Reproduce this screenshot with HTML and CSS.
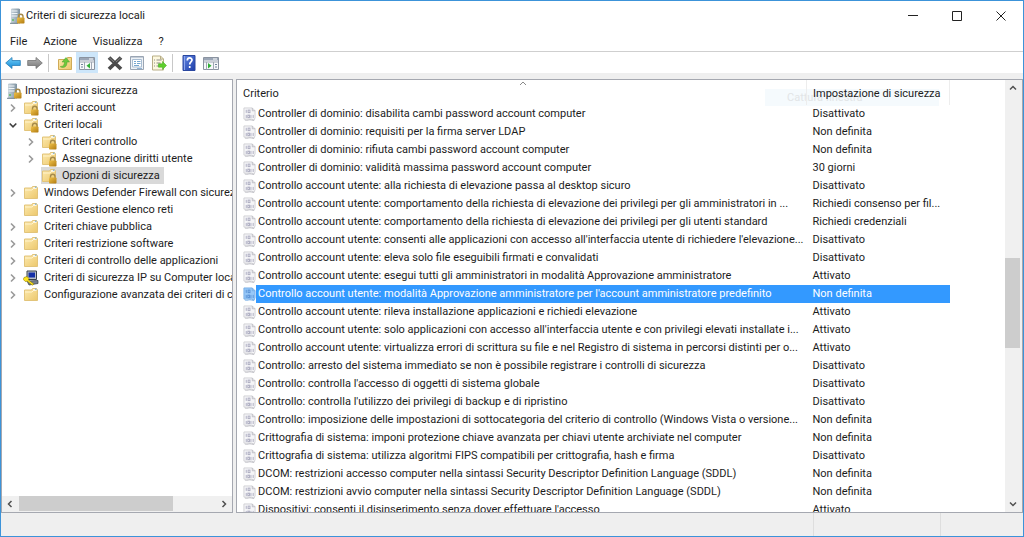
FILE: index.html
```
<!DOCTYPE html>
<html lang="it">
<head>
<meta charset="utf-8">
<title>Criteri di sicurezza locali</title>
<link rel="stylesheet" href="styles.css">
</head>
<body>
<svg class="sprite" aria-hidden="true">
  <defs>
    <linearGradient id="gold" x1="0" y1="0" x2="1" y2="1"><stop offset="0" stop-color="#fdeaae"/><stop offset="1" stop-color="#ecc76c"/></linearGradient>
    <linearGradient id="brass" x1="0" y1="0" x2="1" y2="1"><stop offset="0" stop-color="#f0c24a"/><stop offset="1" stop-color="#b07a10"/></linearGradient>
    <linearGradient id="steel" x1="0" y1="0" x2="1" y2="0"><stop offset="0" stop-color="#c6d2da"/><stop offset="1" stop-color="#7f93a1"/></linearGradient>
    <linearGradient id="sky" x1="0" y1="0" x2="0" y2="1"><stop offset="0" stop-color="#74d0fa"/><stop offset="1" stop-color="#1488d4"/></linearGradient>
    <linearGradient id="ash" x1="0" y1="0" x2="0" y2="1"><stop offset="0" stop-color="#b5b5b5"/><stop offset="1" stop-color="#777"/></linearGradient>
    <linearGradient id="royal" x1="0" y1="0" x2="1" y2="1"><stop offset="0" stop-color="#6488e4"/><stop offset="1" stop-color="#1c3ca8"/></linearGradient>
  </defs>
  <symbol id="lock" viewBox="0 0 16 16">
    <path d="M9.500 10V8.500a2 2 0 0 1 4.500 0V10" fill="none" stroke="#a58a4a" stroke-width="1.400"/>
    <rect x="8" y="9.500" width="7.500" height="6" rx=".8" fill="url(#brass)"/>
  </symbol>
  <symbol id="folder" viewBox="0 0 16 16">
    <path d="M1.500 13.500V3h7l1-1.500h4l1 1.500v10.500z" fill="url(#gold)" stroke="#e2c47a"/>
    <path d="M10 3h3.500" stroke="#fff" stroke-width="1.400"/><path d="M12 2.200h1.500" stroke="#5da4dc"/>
    <path d="M2 5h7l1-1" fill="none" stroke="#fff3cc"/>
  </symbol>
  <symbol id="folder-lock" viewBox="0 0 16 16"><use href="#folder"/><use href="#lock"/></symbol>
  <symbol id="server-lock" viewBox="0 0 16 16">
    <path d="M2 1l1-.6h6.500L11 1v14.500H2z" fill="url(#steel)"/>
    <path d="M2.500 3h6M2.500 5.500h6M2.500 8h6" stroke="#f1f6f9" stroke-width="1.100"/>
    <path d="M3 12h2" stroke="#5fbc5f" stroke-width="1.400"/><path d="M1 15.300h8" stroke="#71818c"/>
    <use href="#lock"/>
  </symbol>
  <symbol id="ipsec" viewBox="0 0 16 16">
    <path d="M4 1h9.500v8.500H4z" fill="#b9bfc6" stroke="#39424d"/><path d="M5.500 2.500h6.500v5H5.500z" fill="#1530a8"/>
    <path d="M4 11l11-.5v3L6 15z" fill="#77808c" stroke="#303944" stroke-width=".7"/>
    <path d="M1 7.500l3-1 2 2-.6 1.500 5.400 4-1.500 1.200-5-4-2 .3-2-2z" fill="#ffe51e" stroke="#8b7800" stroke-width=".6"/>
  </symbol>
  <symbol id="policy" viewBox="0 0 14 16">
    <path class="page" d="M1 1.500h9l3 3V12l-1 2.500-3-1H1z"/>
    <path class="fold" d="M10 1.500v3h3"/>
    <path class="digit" d="M3.500 3.500v3.300M3.500 9v3.300M8.500 9v3.300M11 9v3.300"/>
    <rect class="digit" x="5.500" y="3.800" width="2" height="2.700"/>
    <rect class="digit" x="5.200" y="9.200" width="1.800" height="2.700"/>
    <path class="fold" d="M2 14.500c3 1 5-1 7 0l3 .5"/>
  </symbol>
  <symbol id="right" viewBox="0 0 8 10"><path d="M2 1.500L5.500 5 2 8.500" fill="none" stroke="#9a9a9a" stroke-width="1.600"/></symbol>
  <symbol id="open" viewBox="0 0 8 10"><path d="M.7 3.500L4 6.800l3.300-3.300" fill="none" stroke="#404040" stroke-width="1.600"/></symbol>
</svg>

<div class="window">
  <header class="title-bar">
    <svg class="icon" viewBox="0 0 16 16"><use href="#server-lock"/></svg>
    <h1 class="title">Criteri di sicurezza locali</h1>
    <div class="controls">
      <button class="control" type="button" aria-label="Riduci a icona"><svg class="glyph" viewBox="0 0 12 12"><path d="M1 5.500h10"/></svg></button>
      <button class="control" type="button" aria-label="Ingrandisci"><svg class="glyph" viewBox="0 0 12 12"><path d="M1.500 1.500h9v9h-9z"/></svg></button>
      <button class="control" type="button" aria-label="Chiudi"><svg class="glyph" viewBox="0 0 12 12"><path d="M1.500 1.500l9 9M10.500 1.500l-9 9"/></svg></button>
    </div>
  </header>
  <nav class="menu-bar">
    <button class="menu" type="button">File</button>
    <button class="menu" type="button">Azione</button>
    <button class="menu" type="button">Visualizza</button>
    <button class="menu" type="button">?</button>
  </nav>
  <div class="toolbar">
    <button class="tool" type="button" aria-label="Indietro"><svg class="icon" viewBox="0 0 16 16"><path d="M.7 8L7 2.500v3h8.300v5H7v3z" fill="url(#sky)" stroke="#2a7fb8" stroke-width=".8"/></svg></button>
    <button class="tool" type="button" aria-label="Avanti"><svg class="icon" viewBox="0 0 16 16"><path d="M15.300 8L9 2.500v3H.7v5H9v3z" fill="url(#ash)" stroke="#737373" stroke-width=".8"/></svg></button>
    <span class="separator"></span>
    <button class="tool" type="button" aria-label="Livello superiore"><svg class="icon" viewBox="0 0 16 16"><path d="M1.500 14.500v-10h8l1-2h4v12z" fill="url(#gold)" stroke="#d0ab58"/><path d="M3.500 11.500c3 0 4-2 4-4.500H5l4-4.500L12.500 7H10c0 4-2 6.500-6.500 5z" fill="#6cc83c" stroke="#4a9e2a" stroke-width=".5"/></svg></button>
    <button class="tool active" type="button" aria-label="Mostra albero"><svg class="icon" viewBox="0 0 16 16"><path d="M.5 2.500h15v12H.5z" fill="#f7f8fa" stroke="#8a93a0"/><path d="M1 3h14v2.500H1z" fill="#9ba6b6"/><path d="M10 4h4" stroke="#fff"/><path d="M1 7h14M5.500 7v7.500M12.500 7v7.500" stroke="#a0a8b4"/><path d="M2 9.500h2M2 12h2" stroke="#71839a"/><path d="M11 8v5.500L7.500 10.800z" fill="#2fae35"/></svg></button>
    <span class="spacer"></span>
    <button class="tool" type="button" aria-label="Elimina"><svg class="icon" viewBox="0 0 16 16"><path d="M2 2.500l12 11.500M14 2.500L2 14" stroke="#4a4a4a" stroke-width="3.800"/><path d="M2 2.500l5 4.500M14 2.500L9 7" stroke="#828282"/></svg></button>
    <button class="tool" type="button" aria-label="Proprietà"><svg class="icon" viewBox="0 0 16 16"><path d="M1.500 1.500h13v13h-13z" fill="#eef2f6" stroke="#9aa5b3"/><path d="M3.500 4.500h9v7.500h-9z" fill="#fff" stroke="#a9bdd2"/><path d="M2 2.500h12" stroke="#c5ced9"/><path d="M5 6.500h2M8 6.500h3.500M5 8.500h2M8 8.500h3.500M5 10.500h5" stroke="#77a7cf"/><path d="M8 13.500h5" stroke="#8fb3d5"/></svg></button>
    <button class="tool" type="button" aria-label="Esporta elenco"><svg class="icon" viewBox="0 0 16 16"><path d="M1.500 1h8l3 3v11h-11z" fill="#fdf8df" stroke="#b8ae86"/><path d="M9.500 1v3h3" fill="none" stroke="#b8ae86"/><path d="M3 5h1M5.500 5h5M3 8h1M5.500 8h4M3 11h1M5.500 11h4" stroke="#8d8d88"/><path d="M7.500 8.800h4V6.500l4 4-4 4v-2.300h-4z" fill="#5fcf2d" stroke="#3fa51c" stroke-width=".5"/></svg></button>
    <span class="separator"></span>
    <button class="tool" type="button" aria-label="Guida"><svg class="icon" viewBox="0 0 16 16"><path d="M2 .5h12v15H2z" fill="url(#royal)" stroke="#2a479f"/><path d="M3.500 1v14" stroke="#8da6ec"/><path d="M6.300 5.500c0-3.500 5-3.200 4.700-.3-.2 1.800-2.300 1.800-2.300 4.300M8.700 11v2" fill="none" stroke="#fff" stroke-width="1.700"/></svg></button>
    <button class="tool" type="button" aria-label="Mostra riquadro azioni"><svg class="icon" viewBox="0 0 16 16"><path d="M.5 2.500h15v12H.5z" fill="#f7f8fa" stroke="#8a93a0"/><path d="M1 3h14v2.500H1z" fill="#9ba6b6"/><path d="M10 4h4" stroke="#fff"/><path d="M1 7h14M3.500 7v7.500M10.500 7v7.500" stroke="#a0a8b4"/><path d="M12 9.500h2M12 12h2" stroke="#71839a"/><path d="M5 8v5.500l3.500-2.700z" fill="#2fae35"/></svg></button>
  </div>

  <main class="panes">
    <section class="tree-pane">
      <ul class="tree">
        <li class="node root"><svg class="icon" viewBox="0 0 16 16"><use href="#server-lock"/></svg><span class="root-label">Impostazioni sicurezza</span></li>
        <li class="node"><svg class="arrow"><use href="#right"/></svg><svg class="icon"><use href="#folder-lock"/></svg><span class="label">Criteri account</span></li>
        <li class="node"><svg class="arrow"><use href="#open"/></svg><svg class="icon"><use href="#folder-lock"/></svg><span class="label">Criteri locali</span></li>
        <li class="node child"><svg class="arrow"><use href="#right"/></svg><svg class="icon"><use href="#folder-lock"/></svg><span class="label">Criteri controllo</span></li>
        <li class="node child"><svg class="arrow"><use href="#right"/></svg><svg class="icon"><use href="#folder-lock"/></svg><span class="label">Assegnazione diritti utente</span></li>
        <li class="node child"><span class="arrow"></span><span class="current"><svg class="icon"><use href="#folder-lock"/></svg><span class="label">Opzioni di sicurezza</span></span></li>
        <li class="node"><svg class="arrow"><use href="#right"/></svg><svg class="icon"><use href="#folder"/></svg><span class="label">Windows Defender Firewall con sicurezza avanzata</span></li>
        <li class="node"><span class="arrow"></span><svg class="icon"><use href="#folder"/></svg><span class="label">Criteri Gestione elenco reti</span></li>
        <li class="node"><svg class="arrow"><use href="#right"/></svg><svg class="icon"><use href="#folder"/></svg><span class="label">Criteri chiave pubblica</span></li>
        <li class="node"><svg class="arrow"><use href="#right"/></svg><svg class="icon"><use href="#folder"/></svg><span class="label">Criteri restrizione software</span></li>
        <li class="node"><svg class="arrow"><use href="#right"/></svg><svg class="icon"><use href="#folder"/></svg><span class="label">Criteri di controllo delle applicazioni</span></li>
        <li class="node"><svg class="arrow"><use href="#right"/></svg><svg class="icon"><use href="#ipsec"/></svg><span class="label">Criteri di sicurezza IP su Computer locale</span></li>
        <li class="node"><svg class="arrow"><use href="#right"/></svg><svg class="icon"><use href="#folder"/></svg><span class="label">Configurazione avanzata dei criteri di controllo</span></li>
      </ul>
      <div class="scroll-x">
        <button class="scroll-button" type="button" aria-label="Scorri a sinistra"><svg class="chevron" viewBox="0 0 8 8"><path d="M5.500 1L2.500 4l3 3"/></svg></button>
        <div class="track-x"><div class="thumb-x"></div></div>
        <button class="scroll-button" type="button" aria-label="Scorri a destra"><svg class="chevron" viewBox="0 0 8 8"><path d="M2.500 1l3 3-3 3"/></svg></button>
      </div>
    </section>

    <section class="list-pane">
      <div class="list">
        <svg class="sort" viewBox="0 0 8 5"><path d="M1 4l3-3 3 3"/></svg>
        <div class="ghost">Cattura finestra</div>
        <table class="policies">
          <colgroup><col class="col-name"><col class="col-value"></colgroup>
          <thead><tr><th>Criterio</th><th>Impostazione di sicurezza</th></tr></thead>
          <tbody>
            <tr><td><div class="item"><svg class="doc"><use href="#policy"/></svg><span class="name">Controller di dominio: disabilita cambi password account computer</span></div></td><td>Disattivato</td></tr>
            <tr><td><div class="item"><svg class="doc"><use href="#policy"/></svg><span class="name">Controller di dominio: requisiti per la firma server LDAP</span></div></td><td>Non definita</td></tr>
            <tr><td><div class="item"><svg class="doc"><use href="#policy"/></svg><span class="name">Controller di dominio: rifiuta cambi password account computer</span></div></td><td>Non definita</td></tr>
            <tr><td><div class="item"><svg class="doc"><use href="#policy"/></svg><span class="name">Controller di dominio: validità massima password account computer</span></div></td><td>30 giorni</td></tr>
            <tr><td><div class="item"><svg class="doc"><use href="#policy"/></svg><span class="name">Controllo account utente: alla richiesta di elevazione passa al desktop sicuro</span></div></td><td>Disattivato</td></tr>
            <tr><td><div class="item"><svg class="doc"><use href="#policy"/></svg><span class="name">Controllo account utente: comportamento della richiesta di elevazione dei privilegi per gli amministratori in ...</span></div></td><td>Richiedi consenso per fil...</td></tr>
            <tr><td><div class="item"><svg class="doc"><use href="#policy"/></svg><span class="name">Controllo account utente: comportamento della richiesta di elevazione dei privilegi per gli utenti standard</span></div></td><td>Richiedi credenziali</td></tr>
            <tr><td><div class="item"><svg class="doc"><use href="#policy"/></svg><span class="name">Controllo account utente: consenti alle applicazioni con accesso all'interfaccia utente di richiedere l'elevazione...</span></div></td><td>Disattivato</td></tr>
            <tr><td><div class="item"><svg class="doc"><use href="#policy"/></svg><span class="name">Controllo account utente: eleva solo file eseguibili firmati e convalidati</span></div></td><td>Disattivato</td></tr>
            <tr><td><div class="item"><svg class="doc"><use href="#policy"/></svg><span class="name">Controllo account utente: esegui tutti gli amministratori in modalità Approvazione amministratore</span></div></td><td>Attivato</td></tr>
            <tr class="selected"><td><div class="item"><svg class="doc"><use href="#policy"/></svg><span class="name">Controllo account utente: modalità Approvazione amministratore per l'account amministratore predefinito</span></div></td><td>Non definita</td></tr>
            <tr><td><div class="item"><svg class="doc"><use href="#policy"/></svg><span class="name">Controllo account utente: rileva installazione applicazioni e richiedi elevazione</span></div></td><td>Attivato</td></tr>
            <tr><td><div class="item"><svg class="doc"><use href="#policy"/></svg><span class="name">Controllo account utente: solo applicazioni con accesso all'interfaccia utente e con privilegi elevati installate i...</span></div></td><td>Attivato</td></tr>
            <tr><td><div class="item"><svg class="doc"><use href="#policy"/></svg><span class="name">Controllo account utente: virtualizza errori di scrittura su file e nel Registro di sistema in percorsi distinti per o...</span></div></td><td>Attivato</td></tr>
            <tr><td><div class="item"><svg class="doc"><use href="#policy"/></svg><span class="name">Controllo: arresto del sistema immediato se non è possibile registrare i controlli di sicurezza</span></div></td><td>Disattivato</td></tr>
            <tr><td><div class="item"><svg class="doc"><use href="#policy"/></svg><span class="name">Controllo: controlla l'accesso di oggetti di sistema globale</span></div></td><td>Disattivato</td></tr>
            <tr><td><div class="item"><svg class="doc"><use href="#policy"/></svg><span class="name">Controllo: controlla l'utilizzo dei privilegi di backup e di ripristino</span></div></td><td>Disattivato</td></tr>
            <tr><td><div class="item"><svg class="doc"><use href="#policy"/></svg><span class="name">Controllo: imposizione delle impostazioni di sottocategoria del criterio di controllo (Windows Vista o versione...</span></div></td><td>Non definita</td></tr>
            <tr><td><div class="item"><svg class="doc"><use href="#policy"/></svg><span class="name">Crittografia di sistema: imponi protezione chiave avanzata per chiavi utente archiviate nel computer</span></div></td><td>Non definita</td></tr>
            <tr><td><div class="item"><svg class="doc"><use href="#policy"/></svg><span class="name">Crittografia di sistema: utilizza algoritmi FIPS compatibili per crittografia, hash e firma</span></div></td><td>Disattivato</td></tr>
            <tr><td><div class="item"><svg class="doc"><use href="#policy"/></svg><span class="name">DCOM: restrizioni accesso computer nella sintassi Security Descriptor Definition Language (SDDL)</span></div></td><td>Non definita</td></tr>
            <tr><td><div class="item"><svg class="doc"><use href="#policy"/></svg><span class="name">DCOM: restrizioni avvio computer nella sintassi Security Descriptor Definition Language (SDDL)</span></div></td><td>Non definita</td></tr>
            <tr><td><div class="item"><svg class="doc"><use href="#policy"/></svg><span class="name">Dispositivi: consenti il disinserimento senza dover effettuare l'accesso</span></div></td><td>Attivato</td></tr>
          </tbody>
        </table>
      </div>
      <div class="scroll-y">
        <button class="scroll-button" type="button" aria-label="Scorri in alto"><svg class="chevron" viewBox="0 0 8 8"><path d="M1 5.500l3-3 3 3"/></svg></button>
        <div class="track-y"><div class="before-y"></div><div class="thumb-y"></div><div class="after-y"></div></div>
        <button class="scroll-button" type="button" aria-label="Scorri in basso"><svg class="chevron" viewBox="0 0 8 8"><path d="M1 2.500l3 3 3-3"/></svg></button>
      </div>
    </section>
  </main>
  <footer class="status-bar"><span class="status-main"></span><span class="status-mid"></span><span class="status-end"></span></footer>
</div>
</body>
</html>
```
FILE: styles.css
```
* { box-sizing: border-box; }

body {
  margin: 0;
  font: 11px/18px Roboto, "Liberation Sans", sans-serif;
  color: #1c1c1c;
}

button {
  margin: 0;
  padding: 0;
  border: 0;
  background: none;
  font: inherit;
  color: inherit;
}

.sprite { position: absolute; width: 0; height: 0; }

.window {
  display: flex;
  flex-direction: column;
  height: 100vh;
  border: 1px solid #3c93d9;
  background: #fff;
}

.icon { flex: none; display: block; width: 16px; height: 16px; }

/* Title bar */
.title-bar { display: flex; align-items: center; height: 29px; padding-left: 8px; }
.title { margin: 0 0 0 1px; font-size: 11px; font-weight: 400; }
.controls { display: flex; margin-left: auto; }
.control { display: grid; place-items: center; width: 44px; height: 28px; }
.glyph { width: 12px; height: 12px; fill: none; stroke: #222; stroke-width: 1; }

/* Menu */
.menu-bar { display: flex; align-items: center; gap: 16px; height: 21px; padding: 2px 0 0 9px; }

/* Toolbar */
.toolbar {
  display: flex;
  align-items: center;
  height: 22px;
  padding-left: 1px;
  border-top: 1px solid #cfcfcf;
}
.tool { display: grid; place-items: center; width: 22px; height: 21px; }
.tool.active { background: #cde6fa; }
.separator { width: 1px; height: 18px; margin: 0 5px 0 2px; background: #c8c8c8; }
.spacer { width: 6px; }

/* Panes */
.panes {
  display: flex;
  flex: 1;
  gap: 3px;
  min-height: 0;
  padding-top: 6px;
  background: #efefef;
}
.tree-pane, .list-pane { border: 1px solid #a5a8b0; background: #fff; }

.tree-pane { display: flex; flex-direction: column; width: 232px; }
.tree { flex: 1; margin: 0; padding: 2px 0 0; overflow: hidden; list-style: none; }
.node {
  display: flex;
  align-items: center;
  height: 17px;
  padding-left: 7px;
  white-space: nowrap;
}
.node.root { padding-left: 4px; }
.node.child { padding-left: 25px; }
.arrow { flex: none; width: 8px; height: 10px; margin-right: 6px; }
.label { margin-left: 5px; }
.root-label { margin-left: 3px; }
.current {
  display: flex;
  align-items: center;
  height: 17px;
  padding-right: 4px;
  background: #d9d9d9;
}

/* Scroll bars */
.scroll-x { display: flex; height: 16px; background: #f0f0f0; }
.track-x { flex: 1; }
.thumb-x { width: 78%; height: 15px; margin-left: 1px; background: #cdcdcd; }
.scroll-button { display: grid; place-items: center; width: 16px; height: 16px; }
.chevron { width: 8px; height: 8px; fill: none; stroke: #505050; stroke-width: 1.500; }

.scroll-y { display: flex; flex-direction: column; width: 17px; background: #f0f0f0; }
.track-y { display: flex; flex: 1; flex-direction: column; }
.before-y { flex: 162; }
.thumb-y { flex: 91; width: 15px; background: #cdcdcd; }
.after-y { flex: 148; }

/* Policy list */
.list-pane { display: flex; flex: 1; min-width: 0; }
.list { position: relative; flex: 1; min-width: 0; overflow: hidden; padding-right: 55px; }
.policies { position: relative; width: 100%; border-collapse: collapse; table-layout: fixed; }
.col-value { width: 143px; }
.policies th {
  height: 25px;
  padding: 2px 6px 0;
  border-right: 1px solid #ededed;
  font-weight: 400;
  text-align: left;
}
.policies td { height: 18px; padding: 0 0 0 6px; white-space: nowrap; }
.item { display: flex; align-items: center; height: 18px; }
.doc { flex: none; width: 13px; height: 16px; }
.page { fill: var(--page-fill, #f5f5f7); stroke: var(--page-line, #cfcfd5); }
.fold { fill: none; stroke: var(--page-line, #bcbcc3); }
.digit { fill: none; stroke: var(--page-digit, #acacc0); stroke-width: 1; }
.name { flex: 1; min-width: 0; height: 18px; padding-left: 2px; }
.selected .name, .selected td + td { background: #3399ff; color: #fff; }
.selected .doc { --page-fill: #97c8f8; --page-line: #77aee6; --page-digit: #5a92d6; }
.sort {
  position: absolute;
  left: 50%;
  top: 1px;
  width: 8px;
  height: 5px;
  margin-left: -102px;
  fill: none;
  stroke: #8a8a8a;
}
.ghost {
  position: absolute;
  top: 9px;
  right: 66px;
  width: 174px;
  height: 17px;
  padding-left: 22px;
  background: #f5fafd;
  color: #e2e5e7;
}

/* Status bar */
.status-bar { display: flex; height: 23px; background: #efefef; }
.status-main { flex: 1; }
.status-mid { width: 127px; border-left: 1px solid #dedede; }
.status-end { width: 83px; border-left: 1px solid #dedede; }
```
